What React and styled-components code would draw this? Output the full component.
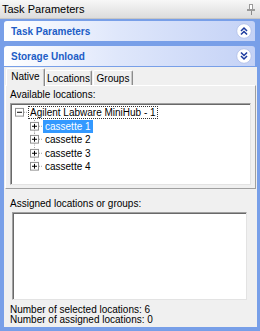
import React from 'react'
import styled, { createGlobalStyle } from 'styled-components'

const GlobalStyle = createGlobalStyle`
  html, body {
    margin: 0;
    padding: 0;
  }
  body {
    width: 260px;
    height: 331px;
    overflow: hidden;
    font-family: "Liberation Sans", Arial, sans-serif;
    font-size: 10px;
    color: #000;
  }
`

const Pane = styled.div`
  display: flex;
  flex-direction: column;
  width: 260px;
  height: 331px;
  background: #789fe8;
`

const TitleBar = styled.div`
  display: flex;
  align-items: center;
  justify-content: space-between;
  height: 19px;
  box-sizing: border-box;
  padding: 0 5px 0 2px;
  background: linear-gradient(#f7f7f7, #dcdcdc);
  border-bottom: 1px solid #c6c6c6;
  font-size: 11px;
`

const Body = styled.div`
  display: flex;
  flex-direction: column;
  flex: 1;
  min-height: 0;
  padding: 2px 3px 4px 4px;
`

const SectionHeader = styled.div`
  display: flex;
  align-items: center;
  justify-content: space-between;
  height: 20px;
  margin: ${p => (p.$first ? 0 : 5)}px 2px 0 0;
  padding: 0 3px 0 7px;
  border-radius: 3px 3px 0 0;
  background: linear-gradient(to right, #ffffff 0%, #dfe7fb 45%, #c4d2f6 100%);
  color: #215dc6;
  font-weight: bold;
  font-size: 10px;
`

const Panel = styled.div`
  display: flex;
  flex-direction: column;
  flex: 1;
  margin-top: 1px;
  background: #f0f0f0;
`

const TabStrip = styled.div`
  display: flex;
  align-items: flex-end;
  height: 18px;
  padding-left: 2px;
`

const Tab = styled.div`
  position: relative;
  z-index: ${p => (p.$active ? 1 : 0)};
  display: flex;
  align-items: center;
  justify-content: center;
  box-sizing: border-box;
  width: ${p => p.$w}px;
  height: ${p => (p.$active ? 18 : 15)}px;
  margin-bottom: ${p => (p.$active ? -1 : 0)}px;
  margin-right: ${p => (p.$active ? 0 : 1)}px;
  padding-bottom: ${p => (p.$active ? 2 : 0)}px;
  background: #f0f0f0;
  border: 1px solid;
  border-color: #ffffff #8c8c8c transparent #ffffff;
  border-bottom: none;
  border-radius: 2px 2px 0 0;
  box-shadow: inset -1px 0 0 #c8c8c8;
  white-space: nowrap;
`

const TabPage = styled.div`
  display: flex;
  flex-direction: column;
  margin: 0 1px;
  padding: 3px 4px;
  border: 1px solid;
  border-color: #ffffff #a0a0a0 #a0a0a0 #ffffff;
`

const FieldLabel = styled.div`
  line-height: 12px;
  margin-bottom: 2px;
  white-space: nowrap;
`

const Sunken = styled.div`
  box-sizing: border-box;
  height: ${p => p.$h}px;
  background: #ffffff;
  border: 1px solid;
  border-color: #a0a0a0 #e3e3e3 #e3e3e3 #a0a0a0;
  box-shadow: inset 1px 1px 0 #696969;
`

const TreeBox = styled(Sunken)`
  padding: 2px 0 0 1px;
`

const TreeRow = styled.div`
  display: flex;
  align-items: stretch;
  height: 13.5px;
  padding-left: ${p => p.$level * 15}px;
`

const Connector = styled.svg`
  flex: none;
  width: 15px;
  height: 100%;
`

const NodeLabel = styled.span`
  align-self: center;
  margin-left: 1px;
  padding: 0 1px;
  line-height: 11px;
  white-space: nowrap;
  border: 1px ${p => (p.$focused ? 'dotted #333' : 'solid transparent')};
  background: ${p => (p.$selected ? '#3399ff' : 'transparent')};
  color: ${p => (p.$selected ? '#ffffff' : '#000000')};
`

const LowerSection = styled.div`
  display: flex;
  flex-direction: column;
  padding: 9px 10px 0 6px;
`

const ListBox = styled(Sunken)`
  margin-left: 2px;
`

const Stats = styled.div`
  margin-top: 5px;
  line-height: 10px;
  white-space: nowrap;
`

const PinIcon = () => (
  <svg width="8" height="11" viewBox="0 0 8 11" shapeRendering="crispEdges">
    <rect x="2.5" y="0.5" width="3" height="5" fill="#ffffff" stroke="#9a9a9a" />
    <rect x="0.5" y="5.5" width="7" height="1" fill="#ffffff" stroke="#9a9a9a" />
    <line x1="4" y1="7" x2="4" y2="11" stroke="#8a8a8a" />
  </svg>
)

const ToggleButton = ({ up }) => (
  <svg width="16" height="16" viewBox="0 0 16 16">
    <circle cx="8" cy="8" r="7.3" fill="#ffffff" stroke="#b7c5ec" strokeWidth="1" />
    <g fill="none" stroke="#1c3a9e" strokeWidth="1.5" strokeLinecap="square">
      {up ? (
        <>
          <polyline points="5.5,7.5 8,5 10.5,7.5" />
          <polyline points="5.5,11 8,8.5 10.5,11" />
        </>
      ) : (
        <>
          <polyline points="5.5,5 8,7.5 10.5,5" />
          <polyline points="5.5,8.5 8,11 10.5,8.5" />
        </>
      )}
    </g>
  </svg>
)

const TreeLines = ({ expanded, root, last }) => (
  <Connector viewBox="0 0 15 14" preserveAspectRatio="none" shapeRendering="crispEdges">
    {!root && (
      <line x1="7.5" y1="0" x2="7.5" y2={last ? 6.5 : 14} stroke="#a0a0a0" strokeDasharray="1 1" />
    )}
    <line x1="12" y1="6.5" x2="15" y2="6.5" stroke="#a0a0a0" strokeDasharray="1 1" />
    <rect x="3.5" y="2.5" width="8" height="8" fill="#ffffff" stroke="#8f8f8f" />
    <line x1="5" y1="6.5" x2="10" y2="6.5" stroke="#000" />
    {!expanded && <line x1="7.5" y1="4" x2="7.5" y2="9" stroke="#000" />}
  </Connector>
)

const cassettes = ['cassette 1', 'cassette 2', 'cassette 3', 'cassette 4']

const App = () => {
  const selected = 0

  return (
    <Pane>
      <GlobalStyle />
      <TitleBar>
        <span>Task Parameters</span>
        <PinIcon />
      </TitleBar>
      <Body>
        <SectionHeader $first>
          Task Parameters
          <ToggleButton up />
        </SectionHeader>
        <SectionHeader>
          Storage Unload
          <ToggleButton />
        </SectionHeader>
        <Panel>
          <TabStrip>
            <Tab $active $w={39}>Native</Tab>
            <Tab $w={47}>Locations</Tab>
            <Tab $w={40}>Groups</Tab>
          </TabStrip>
          <TabPage>
            <FieldLabel>Available locations:</FieldLabel>
            <TreeBox $h={82}>
              <TreeRow $level={0}>
                <TreeLines root expanded />
                <NodeLabel $focused>Agilent Labware MiniHub - 1</NodeLabel>
              </TreeRow>
              {cassettes.map((name, i) => (
                <TreeRow key={name} $level={1}>
                  <TreeLines last={i === cassettes.length - 1} />
                  <NodeLabel $selected={i === selected}>{name}</NodeLabel>
                </TreeRow>
              ))}
            </TreeBox>
          </TabPage>
          <LowerSection>
            <FieldLabel>Assigned locations or groups:</FieldLabel>
            <ListBox $h={88} />
            <Stats>
              Number of selected locations: 6
              <br />
              Number of assigned locations: 0
            </Stats>
          </LowerSection>
        </Panel>
      </Body>
    </Pane>
  )
}

export default App
